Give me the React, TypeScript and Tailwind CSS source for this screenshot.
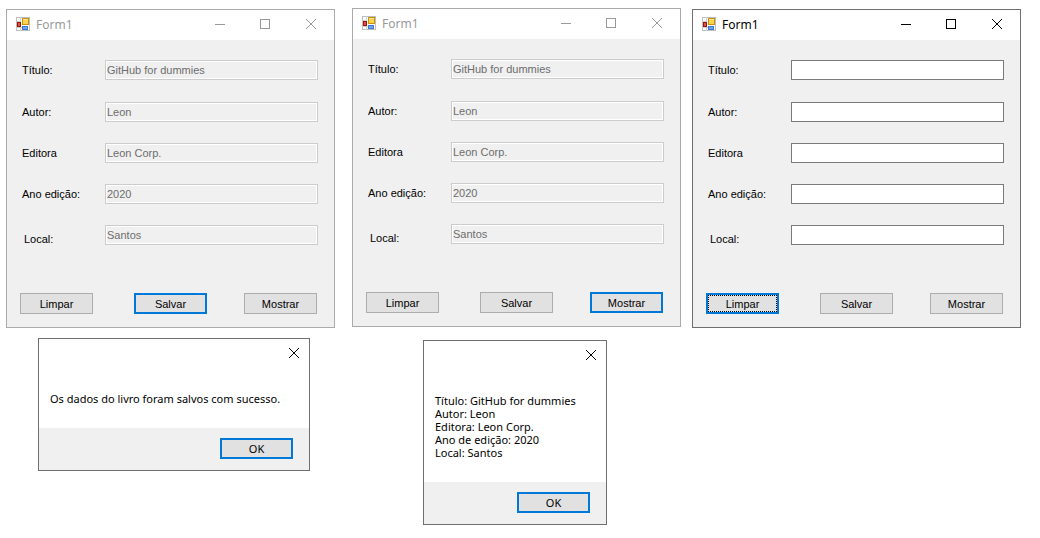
import { useId } from "react";

type Action = "Limpar" | "Salvar" | "Mostrar";

interface Book {
  titulo: string;
  autor: string;
  editora: string;
  ano: string;
  local: string;
}

const savedBook: Book = {
  titulo: "GitHub for dummies",
  autor: "Leon",
  editora: "Leon Corp.",
  ano: "2020",
  local: "Santos",
};

const emptyBook: Book = { titulo: "", autor: "", editora: "", ano: "", local: "" };

const fields: { key: keyof Book; label: string; labelClass: string }[] = [
  { key: "titulo", label: "Título:", labelClass: "" },
  { key: "autor", label: "Autor:", labelClass: "" },
  { key: "editora", label: "Editora", labelClass: "" },
  { key: "ano", label: "Ano edição:", labelClass: "" },
  { key: "local", label: "Local:", labelClass: "pt-2 pl-0.5" },
];

const actions: Action[] = ["Limpar", "Salvar", "Mostrar"];

function AppIcon() {
  return (
    <svg width="14" height="14" viewBox="0 0 14 14" aria-hidden="true" className="shrink-0">
      <rect x="0.5" y="0.5" width="13" height="13" fill="#fff" stroke="#bdbdbd" />
      <path d="M4.5 0v4M0 4.5h5M0 10.5h6M4.5 10v4" stroke="#cfcfcf" fill="none" />
      <rect x="6.5" y="1.5" width="6" height="6" fill="#fcd24a" stroke="#c8920c" />
      <path d="M7 2.5h5" stroke="#ffe79a" />
      <rect x="1.5" y="5.5" width="3" height="4" fill="#e0523c" stroke="#a31208" />
      <rect x="6.5" y="9.5" width="5" height="3" fill="#6fa4f2" stroke="#3f76d0" />
    </svg>
  );
}

function CloseIcon() {
  return (
    <svg
      width="10"
      height="10"
      viewBox="0 0 10 10"
      fill="none"
      stroke="currentColor"
      aria-hidden="true"
    >
      <path d="M0 0l10 10M10 0l-10 10" />
    </svg>
  );
}

function TitleBar() {
  return (
    <header className="flex h-[30px] items-center bg-white pb-0.5 pl-[9px]">
      <AppIcon />
      <h1 className="flex-1 pt-0.5 pl-1.5 font-['Noto_Sans',sans-serif] text-[12px] leading-4">Form1</h1>
      <button aria-label="Minimizar" className="flex h-full w-11 items-center justify-center">
        <svg width="10" height="10" viewBox="0 0 10 10" stroke="currentColor" aria-hidden="true">
          <path d="M0 5.5h10" />
        </svg>
      </button>
      <button aria-label="Maximizar" className="flex h-full w-[46px] items-center justify-center">
        <svg width="10" height="10" viewBox="0 0 10 10" fill="none" stroke="currentColor" aria-hidden="true">
          <rect x="0.5" y="0.5" width="9" height="9" />
        </svg>
      </button>
      <button aria-label="Fechar" className="flex h-full w-[46px] items-center justify-center">
        <CloseIcon />
      </button>
    </header>
  );
}

interface FormWindowProps {
  book: Book;
  editable?: boolean;
  defaultAction: Action;
}

function FormWindow({ book, editable = false, defaultAction }: FormWindowProps) {
  const id = useId();
  const frame = editable ? "border-[#6f6f6f] text-black" : "border-[#aaaaaa] text-[#999999]";
  const box = editable
    ? "border-[#7a7a7a] bg-white text-black"
    : "border-[#cccccc] bg-[#f0f0f0] text-[#6d6d6d] shadow-[inset_0_0_0_1px_#fff]";

  return (
    <section className={`border ${frame}`}>
      <TitleBar />
      <form
        className="bg-[#f0f0f0] pt-5 pb-[13px] font-['Liberation_Sans',Arial,sans-serif] text-[11px] leading-[14px] text-black"
        onSubmit={(event) => event.preventDefault()}
      >
        <div className="flex flex-col gap-[21px] pr-4 pl-[15px]">
          {fields.map(({ key, label, labelClass }) => (
            <div key={key} className="flex h-5 items-center first:mb-px">
              <label htmlFor={`${id}-${key}`} className={`w-[83px] shrink-0 ${labelClass}`}>
                {label}
              </label>
              <input
                id={`${id}-${key}`}
                type="text"
                defaultValue={book[key]}
                disabled={!editable}
                className={`h-5 min-w-0 flex-1 border px-px ${box}`}
              />
            </div>
          ))}
        </div>
        <div className="mt-12 grid grid-cols-[114fr_110fr_73fr] pr-[17px] pl-[13px]">
          {actions.map((action) => {
            const isDefault = action === defaultAction;
            const border = !isDefault
              ? "border border-[#adadad]"
              : editable
                ? "border-2 border-[#0078d7] outline-1 -outline-offset-3 outline-dotted outline-black"
                : "border-2 border-[#0078d7]";
            return (
              <button
                key={action}
                type="button"
                className={`flex h-[21px] w-[73px] items-center justify-center bg-[#e1e1e1] ${border}`}
              >
                {action}
              </button>
            );
          })}
        </div>
      </form>
    </section>
  );
}

function MessageBox({ lines, className }: { lines: string[]; className: string }) {
  return (
    <div
      role="dialog"
      aria-label="Mensagem"
      className={`border border-[#6f6f6f] bg-white font-['Noto_Sans',sans-serif] text-[11px] leading-[13px] text-black ${className}`}
    >
      <div className="flex h-7 justify-end">
        <button aria-label="Fechar" className="flex w-[30px] items-center justify-center">
          <CloseIcon />
        </button>
      </div>
      <div className="pt-[25px] pb-[23px] pl-[11px] whitespace-nowrap">
        {lines.map((line) => (
          <p key={line}>{line}</p>
        ))}
      </div>
      <div className="flex justify-end bg-[#f0f0f0] pt-2.5 pr-4 pb-[11px]">
        <button className="flex h-[21px] w-[73px] items-center justify-center border-2 border-[#0078d7] bg-[#e1e1e1]">
          OK
        </button>
      </div>
    </div>
  );
}

export default function App() {
  return (
    <main className="flex min-h-screen items-start bg-white pr-[19px] pl-1.5">
      <div className="flex-1 pt-[9px]">
        <FormWindow book={savedBook} defaultAction="Salvar" />
        <MessageBox
          className="mt-2.5 ml-8 w-[272px]"
          lines={["Os dados do livro foram salvos com sucesso."]}
        />
      </div>
      <div className="ml-[17px] flex-1 pt-2">
        <FormWindow book={savedBook} defaultAction="Mostrar" />
        <MessageBox
          className="mt-[13px] ml-[71px] w-[184px]"
          lines={[
            "Título: GitHub for dummies",
            "Autor: Leon",
            "Editora: Leon Corp.",
            "Ano de edição: 2020",
            "Local: Santos",
          ]}
        />
      </div>
      <div className="ml-[11px] flex-1 pt-[9px]">
        <FormWindow book={emptyBook} editable defaultAction="Limpar" />
      </div>
    </main>
  );
}
